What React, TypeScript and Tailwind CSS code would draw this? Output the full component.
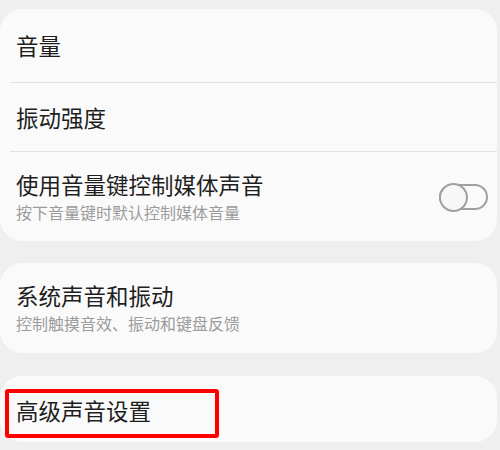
const font = { fontFamily: '"Noto Sans CJK SC", "Noto Sans", sans-serif' };

function Toggle() {
  return (
    <div className="relative w-[49px] h-[26px] rounded-full border-2 border-[#a0a0a0] bg-[#fafafa]">
      <div className="absolute left-[-2px] top-[-3px] w-[29px] h-[29px] rounded-full border-2 border-[#a0a0a0] bg-[#f7f7f7]" />
    </div>
  );
}

export default function App() {
  return (
    <div
      className="w-[500px] h-[450px] overflow-hidden bg-[#efefef] pt-[9px] flex flex-col"
      style={font}
    >
      {/* Card 1 */}
      <div className="bg-[#fafafa] rounded-[22px] mr-[3px] flex flex-col">
        <div className="h-[73px] flex items-center pl-[16px] text-[22.5px] leading-[1.2] text-[#1e1e1e]">
          音量
        </div>
        <div className="ml-[10px] h-px bg-[#e2e2e2]" />
        <div className="h-[68px] flex items-center pl-[16px] text-[22.5px] leading-[1.2] text-[#1e1e1e]">
          振动强度
        </div>
        <div className="ml-[10px] h-px bg-[#e2e2e2]" />
        <div className="h-[89px] flex items-center justify-between pl-[16px] pr-[9px]">
          <div className="flex flex-col gap-[4px]">
            <span className="text-[22.5px] leading-[1.2] text-[#1e1e1e]">使用音量键控制媒体声音</span>
            <span className="text-[16px] leading-[1.3] text-[#9c9c9c]">按下音量键时默认控制媒体音量</span>
          </div>
          <Toggle />
        </div>
      </div>

      {/* Card 2 */}
      <div className="mt-[22px] h-[90px] bg-[#fafafa] rounded-[22px] mr-[3px] flex flex-col justify-center pl-[16px] gap-[4px]">
        <span className="text-[22.5px] leading-[1.2] text-[#1e1e1e]">系统声音和振动</span>
        <span className="text-[16px] leading-[1.3] text-[#9c9c9c]">控制触摸音效、振动和键盘反馈</span>
      </div>

      {/* Card 3 */}
      <div className="relative mt-[23px] h-[66px] bg-[#fafafa] rounded-[22px] mr-[3px] flex items-center pl-[16px] pt-[2px]">
        <span className="text-[22.5px] leading-[1.2] text-[#1e1e1e]">高级声音设置</span>
        <div className="absolute left-[5px] top-[13px] w-[214px] h-[49px] border-4 border-[#ff0000] rounded-[3px]" />
      </div>
    </div>
  );
}
